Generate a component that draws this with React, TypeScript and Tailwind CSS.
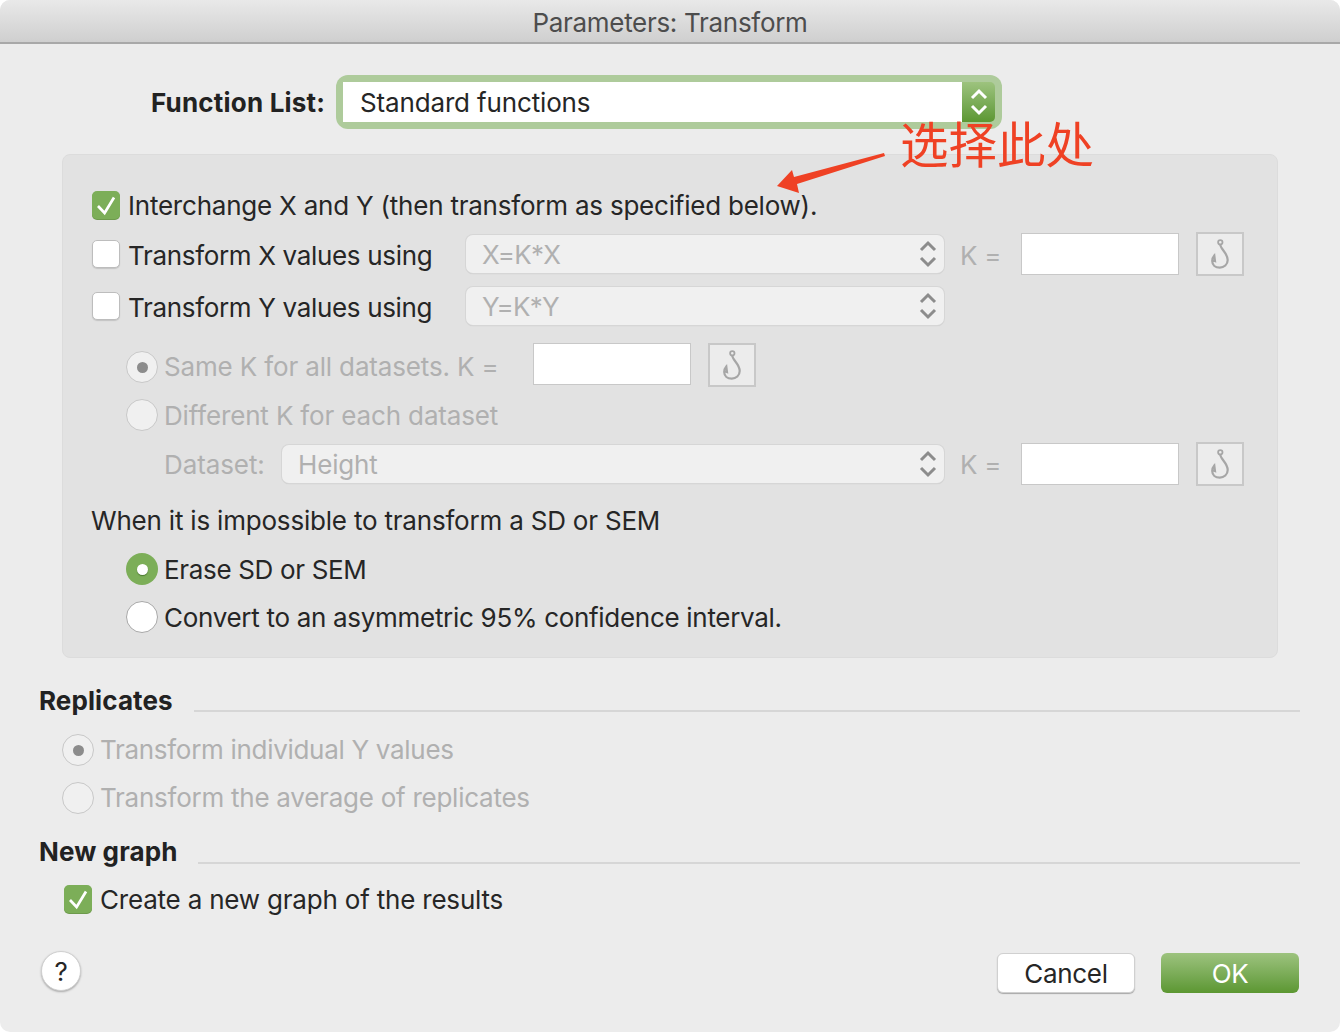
import React from "react";

const Check = ({ on }: { on?: boolean }) =>
  on ? (
    <span className="flex h-[28px] w-[28px] shrink-0 items-center justify-center rounded-[5px] bg-[#7cae58] shadow-[0_1px_0_#6d9a4c]">
      <svg width="28" height="28" viewBox="0 0 28 28" fill="none">
        <path d="M6 15l6.6 7L22 6.5" stroke="#fff" strokeWidth="2.7" />
      </svg>
    </span>
  ) : (
    <span className="h-[28px] w-[28px] shrink-0 rounded-[5px] border border-[#bdbdbd] bg-white shadow-[0_1px_1px_#c4c4c4]" />
  );

const Radio = ({ on }: { on?: boolean }) =>
  on ? (
    <span className="flex h-[32px] w-[32px] shrink-0 items-center justify-center rounded-full bg-[#7cae58]">
      <span className="h-[11px] w-[11px] rounded-full bg-white shadow-[0_1px_1px_#4d7a32]" />
    </span>
  ) : (
    <span className="h-[32px] w-[32px] shrink-0 rounded-full border border-[#a8a8a8] bg-white" />
  );

const DimRadio = ({ dot }: { dot?: boolean }) => (
  <span className="flex h-[32px] w-[32px] shrink-0 items-center justify-center rounded-full border border-[#c8c8c8] bg-[#f0f0f0]">
    {dot && <span className="h-[11px] w-[11px] rounded-full bg-[#8c8c8c]" />}
  </span>
);

const Chevrons = ({ color }: { color: string }) => (
  <svg width="20" height="30" viewBox="0 0 20 30" fill="none">
    <path d="M3 11l7-7 7 7M3 19l7 7 7-7" stroke={color} strokeWidth="3" />
  </svg>
);

const Select = ({
  value,
  className,
  textClass,
}: {
  value: string;
  className: string;
  textClass: string;
}) => (
  <div
    className={
      "flex h-[38px] items-center justify-between rounded-[7px] bg-[#f0f0f0] pl-[16px] pr-[6px] text-[#b0b0b0] shadow-[0_0_0_1px_#d6d6d6,0_1px_1px_#c0c0c0] " +
      className
    }
  >
    <span className={"pt-[2px] " + textClass}>{value}</span>
    <Chevrons color="#8c8c8c" />
  </div>
);

const KInput = () => (
  <div className="h-[42px] w-[158px] shrink-0 border border-[#c8c8c8] bg-white" />
);

const Hook = () => (
  <div className="flex h-[44px] w-[48px] shrink-0 items-center justify-center border-2 border-[#c8c8c8] bg-[#ececec]">
    <svg width="44" height="40" viewBox="0 0 44 40" fill="none">
      <circle cx="22.3" cy="8.3" r="2.2" stroke="#a6a6a6" strokeWidth="1.8" />
      <path
        d="M22.3 10.5C22.3 15 29.7 19 29.7 26c0 4.5-3.7 7.6-7.9 7.6-4.3 0-7.6-2.6-7.6-6.6 0-2 .8-4 2.1-5.5l.7 5.5-2.8-1"
        stroke="#a6a6a6"
        strokeWidth="2.2"
      />
    </svg>
  </div>
);

export default function App() {
  return (
    <div className="relative h-[1032px] w-[1340px] overflow-hidden rounded-[10px] bg-[#ececec] font-['Inter','Noto_Sans_CJK_SC',sans-serif] text-[26px] leading-[32px] tracking-[-0.3px] text-[#262626]">
      {/* title bar */}
      <div className="flex h-[44px] items-center justify-center border-b-2 border-[#a8a8a8] bg-gradient-to-b from-[#e9e9e9] to-[#cfcfcf] pt-[4px] text-[#4d4d4d]">
        Parameters: Transform
      </div>

      {/* function list */}
      <div className="mt-[31px] flex h-[54px] items-center pl-[151px]">
        <span className="w-[185px] pt-[2px] font-bold tracking-[0.2px] text-[#222]">Function List:</span>
        <div className="flex h-[54px] w-[666px] rounded-[12px] bg-[#aecb9b] p-[7px]">
          <div className="flex flex-1 items-center bg-white pl-[17px] pt-[2px] tracking-[-0.15px]">Standard functions</div>
          <div className="flex w-[33px] items-center justify-center rounded-r-[5px] bg-gradient-to-b from-[#9dc37e] to-[#5c9731]">
            <Chevrons color="#fff" />
          </div>
        </div>
      </div>

      {/* transform panel */}
      <div className="ml-[62px] mt-[25px] h-[504px] w-[1216px] rounded-[8px] border border-[#dcdcdc] bg-[#e2e2e2] pl-[29px] pt-[35px]">
        <div className="flex h-[30px] items-center gap-[8px]">
          <Check on />
          <span className="pt-[1px] tracking-[-0.22px]">Interchange X and Y (then transform as specified below).</span>
        </div>

        <div className="mt-[13px] flex h-[42px] items-center">
          <Check />
          <span className="ml-[8px] w-[337px] pt-[4px] tracking-[-0.33px]">Transform X values using</span>
          <Select value="X=K*X" className="mr-[16px] ml-[1px] w-[478px]" textClass="tracking-[-0.7px]" />
          <span className="w-[61px] shrink-0 pt-[4px] text-[#b0b0b0]">K =</span>
          <KInput />
          <div className="ml-[17px]">
            <Hook />
          </div>
        </div>

        <div className="mt-[10px] flex h-[42px] items-center">
          <Check />
          <span className="ml-[8px] w-[337px] pt-[4px] tracking-[-0.33px]">Transform Y values using</span>
          <Select value="Y=K*Y" className="ml-[1px] w-[478px]" textClass="tracking-[-0.7px]" />
        </div>

        <div className="ml-[34px] mt-[16px] flex h-[44px] items-start text-[#b0b0b0]">
          <span className="mt-[8px] flex items-center gap-[6px]">
            <DimRadio dot />
            <span className="w-[369px] tracking-[-0.15px]">Same K for all datasets. K =</span>
          </span>
          <KInput />
          <div className="ml-[17px]">
            <Hook />
          </div>
        </div>

        <div className="ml-[34px] mt-[12px] flex h-[32px] items-center gap-[6px] text-[#b0b0b0]">
          <DimRadio />
          <span className="pt-[2px] tracking-[-0.15px]">Different K for each dataset</span>
        </div>

        <div className="ml-[72px] mt-[11px] flex h-[44px] items-center text-[#b0b0b0]">
          <span className="w-[118px] pt-[2px] tracking-[-0.1px]">Dataset:</span>
          <Select value="Height" className="mr-[16px] w-[662px]" textClass="tracking-[-0.15px]" />
          <span className="w-[61px] shrink-0 pt-[2px] text-[#b0b0b0]">K =</span>
          <KInput />
          <div className="ml-[17px]">
            <Hook />
          </div>
        </div>

        <div className="-ml-[1px] mt-[19px] h-[32px] tracking-[-0.2px]">When it is impossible to transform a SD or SEM</div>

        <div className="ml-[34px] mt-[16px] flex h-[32px] items-center gap-[6px]">
          <Radio on />
          <span className="pt-[2px] tracking-[-0.33px]">Erase SD or SEM</span>
        </div>
        <div className="ml-[34px] mt-[16px] flex h-[32px] items-center gap-[6px]">
          <Radio />
          <span className="pt-[2px]">Convert to an asymmetric 95% confidence interval.</span>
        </div>
      </div>

      {/* replicates */}
      <div className="ml-[39px] mr-[40px] mt-[26px] flex h-[32px] items-center gap-[21px]">
        <span className="pt-[2px] font-bold tracking-[0.1px] text-[#222]">Replicates</span>
        <span className="mt-[21px] h-[2px] flex-1 bg-[#d6d6d6]" />
      </div>
      <div className="ml-[62px] mt-[18px] flex h-[32px] items-center gap-[6px] text-[#b0b0b0]">
        <DimRadio dot />
        <span>Transform individual Y values</span>
      </div>
      <div className="ml-[62px] mt-[16px] flex h-[32px] items-center gap-[6px] text-[#b0b0b0]">
        <DimRadio />
        <span className="tracking-[-0.25px]">Transform the average of replicates</span>
      </div>

      {/* new graph */}
      <div className="ml-[39px] mr-[40px] mt-[22px] flex h-[32px] items-center gap-[21px]">
        <span className="font-bold tracking-[0.1px] text-[#222]">New graph</span>
        <span className="mt-[21px] h-[2px] flex-1 bg-[#d6d6d6]" />
      </div>
      <div className="ml-[64px] mt-[15px] flex h-[32px] items-center gap-[8px]">
        <Check on />
        <span className="pt-[2px] tracking-[-0.2px]">Create a new graph of the results</span>
      </div>

      {/* footer */}
      <div className="ml-[41px] mr-[41px] mt-[36px] flex items-start justify-between">
        <div className="flex h-[40px] w-[40px] items-center justify-center rounded-full border border-[#d0d0d0] bg-white pt-[2px] shadow-[0_1px_2px_#a8a8a8]">
          ?
        </div>
        <div className="mt-[2px] flex gap-[26px]">
          <button className="h-[40px] w-[138px] rounded-[6px] border border-[#d0d0d0] bg-white pt-[2px] shadow-[0_1px_1px_#a8a8a8]">
            Cancel
          </button>
          <button className="h-[40px] w-[138px] rounded-[6px] bg-gradient-to-b from-[#9dc37e] to-[#5c9731] pt-[2px] text-white">
            OK
          </button>
        </div>
      </div>

      {/* annotation drawn over the dialog */}
      <span className="absolute left-[900px] top-[118px] text-[48.5px] font-normal leading-[56px] tracking-normal text-[#ef4124]">
        选择此处
      </span>
      <svg className="absolute left-[770px] top-[148px]" width="120" height="50" viewBox="0 0 120 50">
        <polygon points="7,38 22,22 24,29 114,5 115,8 27,36 29,45" fill="#ef4124" />
      </svg>
    </div>
  );
}
